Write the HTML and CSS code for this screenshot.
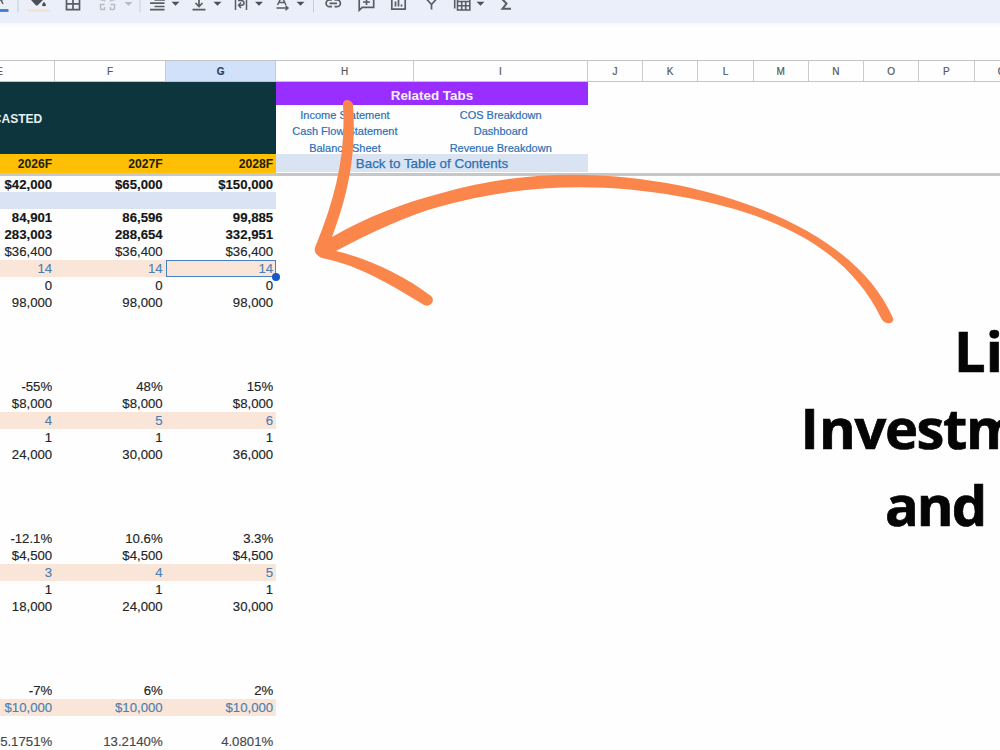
FILE: index.html
```
<!DOCTYPE html>
<html lang="en">
<head>
<meta charset="utf-8">
<title>Forecast sheet</title>
<link rel="stylesheet" href="styles.css">
</head>
<body>
<div class="page">
<header class="toolbar">
<svg class="tools" width="520" height="23" viewBox="0 0 520 23" fill="none" stroke="#5a5d61" stroke-width="1.7">
<path d="M0 0h2.500M1 0l2 4" stroke-width="1.500"/>
<path d="M0 10.500h8.500" stroke="#3b7fc9" stroke-width="2.800"/>
<path d="M28 10.500h22" stroke="#f8e0d2" stroke-width="2.600"/>
<path d="M18 0v12.500M140 0v12.500M313.500 0v12.500" stroke="#c9ccd3" stroke-width="1"/>
<path d="M31 0h12l-5.500 5.500h-1.500z" fill="#4d5054" stroke="none"/>
<path d="M44 1.800q4 4.500 0 4.500t0-4.500" fill="#4d5054" stroke="none"/>
<path d="M66.500-3v12.700h13V-3M73-3v12.700M66.500 3.800h13"/>
<path d="M100.500 0h4v1.500M114.500 0h-4v1.500M100.500 9.500v-5h4M104.500 7v2.500h-4M114.500 9.500v-5h-4M110.500 7v2.500h4" stroke="#b9bcc3" stroke-width="1.500"/>
<path d="M124.500 2h8l-4 4z" fill="#b9bcc3" stroke="none"/>
<path d="M154.500-.2H165M150 3.200h14.500M154.500 6.500h10M150 9.700h14.500"/>
<path d="M171.500 1.800h8l-4 4zM213.500 1.800h8l-4 4zM255 1.800h8l-4 4zM296.500 1.800h8l-4 4zM476.500 1.800h8l-4 4z" fill="#4d5054" stroke="none"/>
<path d="M199-2v8M195.500 3l3.500 3.500L202.500 3M192.500 9.700h13"/>
<path d="M235.500-1v11M246.500-1v11M238 .5h3q3 0 3 2.400t-3 2.400h-2.500M241 2.500l-2.500 2.800 2.500 2.800" stroke-width="1.500"/>
<path d="M277.500 5l3.500-7h1.500l3.500 7M278.500 2.500h7M276.500 8h11.500M285.500 5.800l2.500 2.200-2.500 2.200" stroke-width="1.500"/>
<path d="M332-.2h-2.500a3.300 3.300 0 0 0 0 6.800h2.500M334.500-.2h2.500a3.300 3.300 0 0 1 0 6.800h-2.500M329.500 3.300h7.500"/>
<path d="M359.200-2v12.300l3-3h11.500V-2M366.500-1v6M363 2h7"/>
<path d="M391.800-3V9.200h13.400V-3M395.500 1.500v5M398.500-1v7.500M401.500 4.500v2"/>
<path d="M426.500-1l5 5.500v5M436.500-1l-5 5.500"/>
<path d="M457.500-2v12h12.300v-12M457.500 1.500h12M457.500 5.700h12M461.700 1.500V10M465.700 1.500V10M454.700-1v9.500" stroke-width="1.600"/>
<path d="M502.500-.5L506.500 3.500 502.500 8.700H511" stroke-width="2"/>
</svg>
</header>
<div class="columns">
<span>E</span><span>F</span><span class="active">G</span><span>H</span><span>I</span><span>J</span><span>K</span><span>L</span><span>M</span><span>N</span><span>O</span><span>P</span><span>Q</span>
</div>
<section class="frozen">
<div class="forecast">
<div class="banner">FORECASTED</div>
<div class="years"><span>2026F</span><span>2027F</span><span>2028F</span></div>
</div>
<div class="related">
<div class="title">Related Tabs</div>
<div class="links"><a>Income Statement</a><a>COS Breakdown</a><a>Cash Flow Statement</a><a>Dashboard</a><a>Balance Sheet</a><a>Revenue Breakdown</a></div>
<a class="back">Back to Table of Contents</a>
</div>
</section>
<main class="rows">
<div class="row bold"><span>$42,000</span><span>$65,000</span><span>$150,000</span></div>
<div class="row band"></div>
<div class="row bold"><span>84,901</span><span>86,596</span><span>99,885</span></div>
<div class="row bold"><span>283,003</span><span>288,654</span><span>332,951</span></div>
<div class="row"><span>$36,400</span><span>$36,400</span><span>$36,400</span></div>
<div class="row input"><span>14</span><span>14</span><span class="selected">14</span></div>
<div class="row"><span>0</span><span>0</span><span>0</span></div>
<div class="row"><span>98,000</span><span>98,000</span><span>98,000</span></div>
<div class="row"></div><div class="row"></div><div class="row"></div><div class="row"></div>
<div class="row"><span>-55%</span><span>48%</span><span>15%</span></div>
<div class="row"><span>$8,000</span><span>$8,000</span><span>$8,000</span></div>
<div class="row input"><span>4</span><span>5</span><span>6</span></div>
<div class="row"><span>1</span><span>1</span><span>1</span></div>
<div class="row"><span>24,000</span><span>30,000</span><span>36,000</span></div>
<div class="row"></div><div class="row"></div><div class="row"></div><div class="row"></div>
<div class="row"><span>-12.1%</span><span>10.6%</span><span>3.3%</span></div>
<div class="row"><span>$4,500</span><span>$4,500</span><span>$4,500</span></div>
<div class="row input"><span>3</span><span>4</span><span>5</span></div>
<div class="row"><span>1</span><span>1</span><span>1</span></div>
<div class="row"><span>18,000</span><span>24,000</span><span>30,000</span></div>
<div class="row"></div><div class="row"></div><div class="row"></div><div class="row"></div>
<div class="row"><span>-7%</span><span>6%</span><span>2%</span></div>
<div class="row input"><span>$10,000</span><span>$10,000</span><span>$10,000</span></div>
<div class="row"></div>
<div class="row muted"><span>5.1751%</span><span>13.2140%</span><span>4.0801%</span></div>
</main>
<svg class="arrow" width="1000" height="750" viewBox="0 0 1000 750" fill="#fa864c">
<path d="M343 105C342 99 350 98 353 104C356 148 351 187 332 237C368 216 404 203 440 193.500C520 170 600 170 680 185.500C780 207 863 250 893 318C895 324 885 326 881 318C845 243 765 212 680 196.500C600 182 520 184 440 206.500C406 216 372 232 336 251C373 260 406 277 431 296C436 301 430 308 424 305C390 284 358 265 322 258C315 255 313 250 316 245C336 196 346 153 343 105Z"/>
</svg>
<aside class="callout"><p class="l1">Li</p><p class="l2"><span class="cap">I</span>nvestm</p><p class="l3">and</p></aside>
</div>
</body>
</html>
```
FILE: styles.css
```
* { box-sizing: border-box; }
body { margin: 0; background: #fefefe; font-family: "Liberation Sans", Arial, sans-serif; }
.page { position: relative; width: 1000px; height: 750px; overflow: hidden; }
.toolbar { height: 23px; margin-bottom: 37px; background: #ebeff9; box-shadow: 0 1px 4px #f4f5fa; }
.tools { display: block; }
.columns {
  display: grid;
  grid-template-columns: 110.500px 110.500px 110.500px 137.500px 174px repeat(8, 55.250px);
  width: 1084px; height: 22px; margin-left: -55.200px;
  border-top: 1px solid #c3c4c6; border-bottom: 1px solid #c3c4c6;
  font-size: 10px; color: #55585b; -webkit-text-stroke: .2px;
}
.columns span { display: flex; align-items: center; justify-content: center; border-right: 1px solid #c9cacc; }
.columns .active { background: #d2e1fa; color: #233f60; font-weight: bold; }
.frozen { display: flex; height: 93.500px; border-bottom: 3px solid #c6c7c8; }
.forecast { width: 276.200px; }
.banner { height: 72px; padding-top: 29.500px; padding-right: 234px; display: flex; justify-content: flex-end; background: #0d353e; color: #e8eff0; font: bold 12px/14px "Liberation Sans", Arial, sans-serif; }
.years { height: 18.500px; background: #ffbf05; font-weight: bold; font-size: 12.200px; line-height: 20px; color: #241d08; }
.years, .row { display: grid; grid-template-columns: 55.200px 110.500px 110.500px; width: 276.200px; text-align: right; }
.years span, .row span { padding-right: 3px; display: flex; justify-content: flex-end; white-space: nowrap; }
.related { width: 311.500px; text-align: center; color: #2b70b5; }
.title { height: 22.700px; background: #982eff; color: #f8efff; font-weight: bold; font-size: 13.400px; line-height: 28px; }
.links { display: grid; grid-template-columns: 137.500px 174px; grid-auto-rows: 16.800px; height: 49.300px; overflow: hidden; font-size: 11px; line-height: 20px; -webkit-text-stroke: .2px; }
.back { display: block; height: 18.500px; background: #d9e3f2; font-size: 13.400px; line-height: 20px; -webkit-text-stroke: .25px; }
.row { height: 16.900px; font-size: 13.200px; line-height: 17px; color: #222426; -webkit-text-stroke: .15px; }
.bold { font-weight: bold; color: #151617; }
.band { background: #d9e3f3; }
.input { background: #fae5d9; color: #4c80b2; }
.muted { color: #45474a; }
.row .selected { position: relative; border: 1.500px solid #477fc8; padding-right: 2px; line-height: 15px; }
.selected::after { content: ""; position: absolute; right: -5px; bottom: -5px; width: 8px; height: 8px; border-radius: 50%; background: #1558cc; }
.arrow { position: absolute; left: 0; top: 0; }
.callout { position: absolute; left: 800px; top: 312px; width: 200px; font: bold 56px/77px "Open Sans", sans-serif; color: #050505; white-space: nowrap; -webkit-text-stroke: .7px; }
.callout p { margin: 0; height: 77px; }
.l1 { padding-left: 154px; }
.l2 { padding-left: 2px; letter-spacing: -1.400px; }
.l3 { padding-left: 85px; letter-spacing: -2px; }
.cap { font-family: Inter, sans-serif; font-size: 55px; line-height: 0; margin-right: 3px; }
```
